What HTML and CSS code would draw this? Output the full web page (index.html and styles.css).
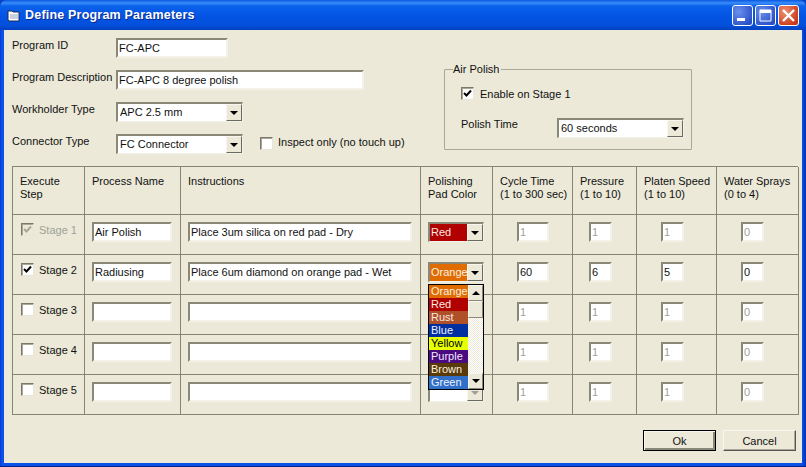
FILE: index.html
```html
<!DOCTYPE html>
<html lang="en">
<head>
<meta charset="utf-8">
<title>Define Program Parameters</title>
<link rel="stylesheet" href="styles.css">
</head>
<body>
<div class="window">
  <header class="titlebar">
    <svg class="app-icon" width="14" height="14" viewBox="0 0 14 14"><path d="M1 2h4l1 1h6v9H2L1 11z" fill="#fff" stroke="#1a2a50"/><path d="M3 5h8v5H3z" fill="#c8d0e0"/></svg>
    <span class="title">Define Program Parameters</span>
    <div class="caption-buttons">
      <span class="cap cap-blue"><svg width="21" height="21" viewBox="0 0 21 21"><rect x="5" y="13" width="8" height="3" fill="#fff"/></svg></span>
      <span class="cap cap-blue"><svg width="21" height="21" viewBox="0 0 21 21"><path d="M5 5h11v11H5z" fill="none" stroke="#fff"/><rect x="5" y="5" width="11" height="3" fill="#fff"/></svg></span>
      <span class="cap cap-red"><svg width="21" height="21" viewBox="0 0 21 21"><path d="M5 5l11 11M16 5L5 16" stroke="#fff" stroke-width="2.4"/></svg></span>
    </div>
  </header>
  <main class="client">
    <section class="top">
      <div class="fields">
        <div class="field"><label class="field-label">Program ID</label><input class="box w-id" value="FC-APC" readonly></div>
        <div class="field"><label class="field-label">Program Description</label><input class="box w-desc" value="FC-APC 8 degree polish" readonly></div>
        <div class="field"><label class="field-label">Workholder Type</label>
          <div class="combo w-combo"><span class="combo-text">APC 2.5 mm</span><span class="arrow"><i></i></span></div></div>
        <div class="field"><label class="field-label">Connector Type</label>
          <div class="combo w-combo"><span class="combo-text">FC Connector</span><span class="arrow"><i></i></span></div>
          <span class="check inspect"></span><span class="inspect-label">Inspect only (no touch up)</span></div>
      </div>
      <fieldset class="group">
        <legend>Air Polish</legend>
        <div class="group-check"><span class="check on"><svg width="9" height="9" viewBox="0 0 9 9"><path d="M1 4l2.5 2.5L8 1.5" fill="none" stroke="#000" stroke-width="2"/></svg></span><span>Enable on Stage 1</span></div>
        <div class="group-time"><span class="time-label">Polish Time</span>
          <div class="combo w-time"><span class="combo-text">60 seconds</span><span class="arrow"><i></i></span></div></div>
      </fieldset>
    </section>

    <section class="table">
      <div class="cell head">Execute<br>Step</div>
      <div class="cell head">Process Name</div>
      <div class="cell head">Instructions</div>
      <div class="cell head">Polishing<br>Pad Color</div>
      <div class="cell head">Cycle Time<br>(1 to 300 sec)</div>
      <div class="cell head">Pressure<br>(1 to 10)</div>
      <div class="cell head">Platen Speed<br>(1 to 10)</div>
      <div class="cell head">Water Sprays<br>(0 to 4)</div>

      <div class="cell step off"><span class="check dis"><svg width="9" height="9" viewBox="0 0 9 9"><path d="M1 4l2.5 2.5L8 1.5" fill="none" stroke="#a8a898" stroke-width="2"/></svg></span>Stage 1</div>
      <div class="cell pad"><input class="box w-name" value="Air Polish" readonly></div>
      <div class="cell pad"><input class="box w-ins" value="Place 3um silica on red pad - Dry" readonly></div>
      <div class="cell pad"><div class="combo w-color c-red"><span class="combo-text">Red</span><span class="arrow"><i></i></span></div></div>
      <div class="cell num-a"><input class="box w-cyc dis-in" value="1" readonly></div>
      <div class="cell num-b"><input class="box w-num dis-in" value="1" readonly></div>
      <div class="cell num-a"><input class="box w-num dis-in" value="1" readonly></div>
      <div class="cell num-a"><input class="box w-num dis-in" value="0" readonly></div>

      <div class="cell step"><span class="check on"><svg width="9" height="9" viewBox="0 0 9 9"><path d="M1 4l2.5 2.5L8 1.5" fill="none" stroke="#000" stroke-width="2"/></svg></span>Stage 2</div>
      <div class="cell pad"><input class="box w-name" value="Radiusing" readonly></div>
      <div class="cell pad"><input class="box w-ins" value="Place 6um diamond on orange pad - Wet" readonly></div>
      <div class="cell pad dropcell"><div class="combo w-color c-orange"><span class="combo-text">Orange</span><span class="arrow"><i></i></span></div>
        <div class="droplist">
          <ul class="items">
            <li class="c-orange">Orange</li><li class="c-red">Red</li><li class="c-rust">Rust</li><li class="c-blue">Blue</li>
            <li class="c-yellow">Yellow</li><li class="c-purple">Purple</li><li class="c-brown">Brown</li><li class="c-green">Green</li>
          </ul>
          <div class="scroll">
            <span class="sbtn"><i class="up"></i></span><span class="thumb"></span><span class="track"></span><span class="sbtn"><i></i></span>
          </div>
        </div>
      </div>
      <div class="cell num-a"><input class="box w-cyc" value="60" readonly></div>
      <div class="cell num-b"><input class="box w-num" value="6" readonly></div>
      <div class="cell num-a"><input class="box w-num" value="5" readonly></div>
      <div class="cell num-a"><input class="box w-num" value="0" readonly></div>

      <div class="cell step"><span class="check"></span>Stage 3</div>
      <div class="cell pad"><input class="box w-name" readonly></div>
      <div class="cell pad"><input class="box w-ins" readonly></div>
      <div class="cell pad"></div>
      <div class="cell num-a"><input class="box w-cyc dis-in" value="1" readonly></div>
      <div class="cell num-b"><input class="box w-num dis-in" value="1" readonly></div>
      <div class="cell num-a"><input class="box w-num dis-in" value="1" readonly></div>
      <div class="cell num-a"><input class="box w-num dis-in" value="0" readonly></div>

      <div class="cell step"><span class="check"></span>Stage 4</div>
      <div class="cell pad"><input class="box w-name" readonly></div>
      <div class="cell pad"><input class="box w-ins" readonly></div>
      <div class="cell pad"></div>
      <div class="cell num-a"><input class="box w-cyc dis-in" value="1" readonly></div>
      <div class="cell num-b"><input class="box w-num dis-in" value="1" readonly></div>
      <div class="cell num-a"><input class="box w-num dis-in" value="1" readonly></div>
      <div class="cell num-a"><input class="box w-num dis-in" value="0" readonly></div>

      <div class="cell step"><span class="check"></span>Stage 5</div>
      <div class="cell pad"><input class="box w-name" readonly></div>
      <div class="cell pad"><input class="box w-ins" readonly></div>
      <div class="cell pad"><div class="combo w-color"><span class="combo-text"></span><span class="arrow arrow-dis"><i></i></span></div></div>
      <div class="cell num-a"><input class="box w-cyc dis-in" value="1" readonly></div>
      <div class="cell num-b"><input class="box w-num dis-in" value="1" readonly></div>
      <div class="cell num-a"><input class="box w-num dis-in" value="1" readonly></div>
      <div class="cell num-a"><input class="box w-num dis-in" value="0" readonly></div>
    </section>

    <footer class="actions">
      <button class="btn default">Ok</button>
      <button class="btn">Cancel</button>
    </footer>
  </main>
</div>
</body>
</html>
```
FILE: styles.css
```css
* { box-sizing: border-box; }
html, body { margin: 0; padding: 0; }
body { width: 806px; height: 467px; overflow: hidden; background: #0a42c8; font: 11px/14px "Liberation Sans", Arial, sans-serif; color: #111; }
.window { width: 806px; height: 467px; display: flex; flex-direction: column; background: linear-gradient(90deg, #0838d8, #0a52e8 2px, #0a52e8 802px, #0230b0); padding: 0 4px 3px; border-bottom: 1px solid #00208a; border-radius: 7px 7px 0 0; }

.titlebar { height: 30px; margin: 0 -4px; padding: 0 6px 0 7px; display: flex; align-items: center; gap: 4px; background: linear-gradient(180deg, #0a58e0 0, #3a8cf8 3px, #0a62ea 6px, #0454e4 16px, #0350dc 25px, #0340c0 30px); border-radius: 7px 7px 0 0; }
.title { color: #fff; font-weight: 700; font-size: 12.5px; letter-spacing: .2px; text-shadow: 1px 1px 0 #0a2a90; }
.app-icon { flex: none; margin-top: 1px; }
.caption-buttons { margin-left: auto; display: flex; gap: 2px; margin-right: 1px; margin-top: 1px; }
.cap { width: 21px; height: 21px; border: 1px solid #fff; border-radius: 3px; display: block; overflow: hidden; }
.cap svg { display: block; margin: -1px; }
.cap-blue { background: radial-gradient(circle at 30% 30%, #6a90ee, #2a50c8 80%); }
.cap-red { background: radial-gradient(circle at 30% 30%, #f09070, #c83818 80%); }

.client { flex: 1; background: #ece9d8; padding: 8px 5px 0 8px; display: flex; flex-direction: column; min-height: 0; }

.top { display: flex; height: 128px; }
.fields { width: 432px; display: flex; flex-direction: column; gap: 12px; }
.field { display: flex; height: 20px; position: relative; }
.field-label { width: 104px; flex: none; line-height: 16px; margin-top: -1px; white-space: nowrap; }

.box { display: block; height: 20px; border: 2px solid; border-color: #8a8878 #f4f2e8 #f4f2e8 #8a8878; background: #fff; font: 11px/14px "Liberation Sans", Arial, sans-serif; color: #111; padding: 0 0 0 1px; outline: none; margin: 0; border-radius: 0; }
.w-id { width: 112px; }
.w-desc { width: 248px; }
.w-name { width: 80px; }
.w-ins { width: 224px; }
.w-cyc { width: 32px; }
.w-num { width: 23px; }
.dis-in { color: #a0a098; }

.combo { display: flex; height: 20px; border-style: solid; border-width: 2px 1px 1px 2px; border-color: #8a8878 #f4f2e8 #f4f2e8 #8a8878; background: #fff; overflow: hidden; }
.combo-text { flex: 1; padding: 1px 0 0 2px; white-space: nowrap; overflow: hidden; line-height: 15px; }
.w-combo { width: 127px; }
.w-time { width: 127px; height: 20px; }
.w-color { width: 56px; }
.w-color .combo-text { padding-left: 1px; }
.arrow { width: 16px; flex: none; background: #ece9d8; border: 1px solid; border-color: #f8f6ee #6a6a60 #6a6a60 #f8f6ee; display: flex; align-items: center; justify-content: center; }
.arrow i { width: 0; height: 0; border-left: 4px solid transparent; border-right: 4px solid transparent; border-top: 4px solid #000; }
.arrow-dis i { border-top-color: #a0a098; }

.check { width: 13px; height: 13px; flex: none; display: flex; align-items: center; justify-content: center; background: #fff; border: 1px solid; border-color: #7a7868 #e8e6da #e8e6da #7a7868; box-shadow: inset 1px 1px 0 #aca899; }
.check.dis { background: #ece9d8; }
.inspect { margin: 3px 0 0 17px; }
.inspect-label { margin: 1px 0 0 5px; white-space: nowrap; }

.group { margin: 31px 0 0 0; width: 248px; height: 81px; border: 1px solid #a8a898; padding: 0; border-radius: 1px; min-width: 0; }
.group legend { padding: 0 2px 0 0; margin-left: 8px; line-height: 1px; height: 1px; font-size: 11px; }
.group-check { display: flex; align-items: center; gap: 6px; margin-top: 17px; height: 13px; padding-left: 16px; }
.group-time { display: flex; margin-top: 18px; padding-left: 16px; }
.time-label { width: 96px; flex: none; margin-top: -1px; }

.table { width: 786px; height: 249px; display: grid; grid-template-columns: 72px 96px 240px 72px 80px 64px 80px 82px; grid-template-rows: 48px repeat(5, 40px); border-top: 1px solid #858575; border-left: 1px solid #858575; background: #ece9d8; }
.cell { border-right: 1px solid #858575; border-bottom: 1px solid #858575; position: relative; }
.head { padding: 8px 0 0 7px; line-height: 13px; white-space: nowrap; }
.step { display: flex; align-items: center; gap: 5px; padding: 0 0 10px 8px; }
.step.off { color: #a0a098; }
.pad { padding: 7px 0 0 7px; }
.num-a { padding: 7px 0 0 24px; }
.num-b { padding: 7px 0 0 16px; }

.c-orange { background: #e06c00; color: #f8f0e0; }
.c-red { background: #b00000; color: #f8e8e0; }
.c-rust { background: #b05028; color: #f8e8e0; }
.c-blue { background: #0030a0; color: #f0f0ff; }
.c-yellow { background: #e8ff00; color: #000; }
.c-purple { background: #4a0a80; color: #f0e8ff; }
.c-brown { background: #5a3a08; color: #f8f0e0; }
.c-green { background: #3070c8; color: #f0f0ff; }

.droplist { position: absolute; left: 7px; top: 29px; width: 56px; height: 106px; border: 1px solid #000; background: #fff; display: flex; z-index: 2; }
.items { list-style: none; margin: 0; padding: 0; flex: 1; }
.items li { height: 13px; line-height: 13px; padding-left: 2px; overflow: hidden; }
.scroll { width: 15px; display: flex; flex-direction: column; background: repeating-conic-gradient(#ece9d8 0 25%, #fff 0 50%) 0 0 / 2px 2px; }
.sbtn { height: 16px; background: #ece9d8; display: flex; align-items: center; justify-content: center; border: 1px solid; border-color: #f8f6ee #8a8878 #8a8878 #f8f6ee; flex: none; }
.sbtn i { width: 0; height: 0; border-left: 4px solid transparent; border-right: 4px solid transparent; border-top: 4px solid #000; }
.sbtn i.up { border-top: 0; border-bottom: 4px solid #000; }
.thumb { height: 17px; background: #ece9d8; border: 1px solid; border-color: #f8f6ee #8a8878 #8a8878 #f8f6ee; flex: none; }
.track { flex: 1; }

.actions { display: flex; justify-content: flex-end; gap: 7px; margin-top: 15px; padding-right: 1px; }
.btn { width: 73px; height: 21px; background: #ece9d8; border: 1px solid; border-color: #f8f6ee #555 #555 #f8f6ee; font: 11px/14px "Liberation Sans", Arial, sans-serif; color: #111; padding: 0; border-radius: 0; box-shadow: inset -1px -1px 0 #aca899; }
.btn.default { border: 1px solid #000; box-shadow: inset 1px 1px 0 #f8f6ee, inset -2px -2px 0 #8a8878; }
```
